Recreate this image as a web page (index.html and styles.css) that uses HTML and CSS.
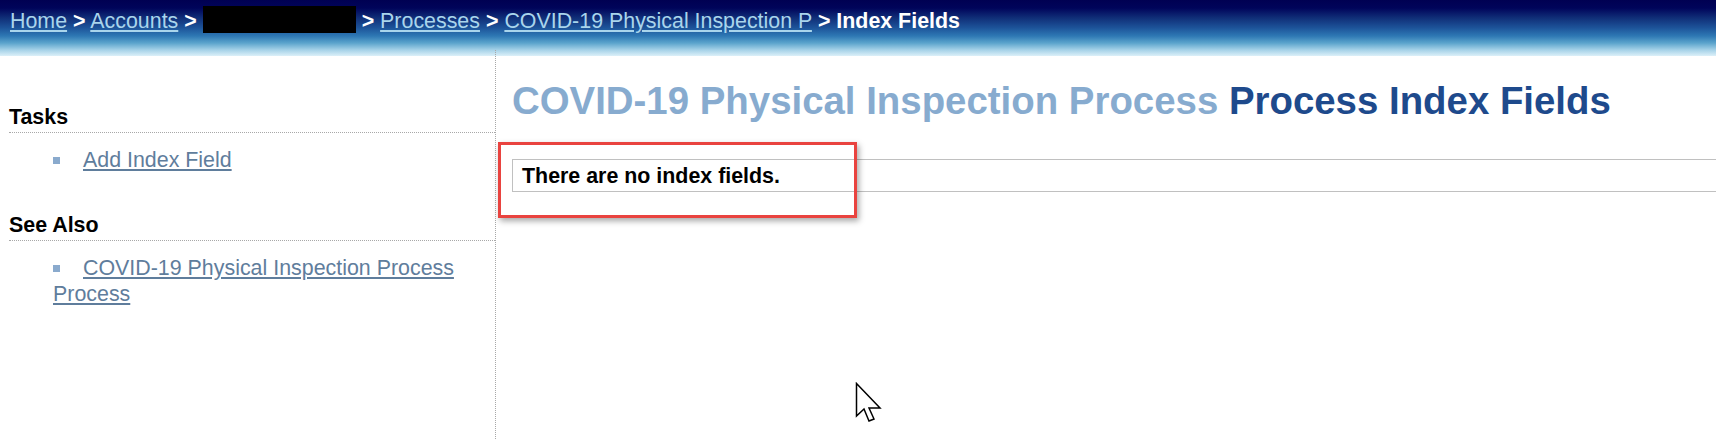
FILE: index.html
```html
<!DOCTYPE html>
<html lang="en">
<head>
    <meta charset="UTF-8">
    <title>Process Index Fields</title>
    <link rel="stylesheet" href="styles.css">
</head>
<body>
    <header class="topbar">
        <nav class="crumbs">
            <a href="#">Home</a> <b>&gt;</b> <a href="#">Accounts</a> <b>&gt;</b> <span class="redacted"></span> <b>&gt;</b> <a href="#">Processes</a> <b>&gt;</b> <a href="#">COVID-19 Physical Inspection P</a> <b>&gt; Index Fields</b>
        </nav>
    </header>
    <div class="layout">
        <aside class="sidebar">
            <h3>Tasks</h3>
            <ul>
                <li><span class="bullet"></span><a href="#">Add Index Field</a></li>
            </ul>
            <h3>See Also</h3>
            <ul>
                <li><span class="bullet"></span><a href="#">COVID-19 Physical Inspection Process Process</a></li>
            </ul>
        </aside>
        <main class="content">
            <h1><span class="parent">COVID-19 Physical Inspection Process</span> Process Index Fields</h1>
            <div class="empty">There are no index fields.</div>
        </main>
    </div>
    <div class="highlight"></div>
    <svg class="cursor" width="28" height="42" viewBox="0 0 28 42">
        <path d="M1.5 1.5 L1.5 34 L9 27 L14 39 L19 37 L14 26 L25 26 Z" fill="#fff" stroke="#000" stroke-width="1.5" stroke-linejoin="miter"/>
    </svg>
</body>
</html>
```

FILE: styles.css
```css
body {
    margin: 0;
    font-family: "Liberation Sans", Arial, sans-serif;
    font-size: 21.4px;
    color: #000;
    background: #fff linear-gradient(to bottom, #000052 0, #00045a 8px, #102f78 18px, #1d549a 28px, #2e78b4 36px, #5ba4cc 43px, #a6d2e8 50px, #dcf0f9 56px, #fff 56px) no-repeat;
    background-size: 100% 56px;
    height: 439px;
    overflow: hidden;
}

.topbar {
    height: 50px;
}

.crumbs {
    padding: 6px 0 0 10px;
    line-height: 24px;
    color: #fff;
    white-space: nowrap;
}

.crumbs a {
    color: #a9d5ec;
}

.redacted {
    display: inline-block;
    width: 153px;
    height: 27px;
    background: #000;
    vertical-align: -5px;
}

.layout {
    display: flex;
    height: 389px;
}

.sidebar {
    width: 496px;
    box-sizing: border-box;
    padding-left: 9px;
    border-right: 1px dotted #a8a8a8;
}

.sidebar h3 {
    margin: 55px 0 0;
    padding-bottom: 3px;
    font-size: 21.4px;
    line-height: 24px;
    border-bottom: 1px dotted #a8a8a8;
}

.sidebar h3 + ul + h3 {
    margin-top: 40px;
}

.sidebar ul {
    list-style: none;
    margin: 14px 0 0;
    padding: 0 0 0 44px;
}

.sidebar li {
    line-height: 26px;
}

.bullet {
    display: inline-block;
    width: 7px;
    height: 7px;
    background: #8aaacd;
    margin-right: 23px;
    vertical-align: 3px;
}

.sidebar a {
    color: #5f7d9c;
}

.content {
    flex: 1;
    padding-left: 16px;
}

.content h1 {
    margin: 29px 0 0;
    font-size: 38.4px;
    line-height: 44px;
    color: #1e4a8c;
    white-space: nowrap;
}

.content h1 .parent {
    color: #87abcf;
}

.empty {
    margin-top: 36px;
    padding: 4px 9px 3px;
    border: 1px solid #c0c0c0;
    border-right: none;
    font-weight: bold;
    line-height: 24px;
}

.highlight {
    position: absolute;
    left: 498px;
    top: 142px;
    width: 353px;
    height: 70px;
    border: 3px solid #e9433f;
    box-shadow: 2px 3px 6px rgba(0, 0, 0, 0.35);
}

.cursor {
    position: absolute;
    left: 855px;
    top: 382px;
}
```
